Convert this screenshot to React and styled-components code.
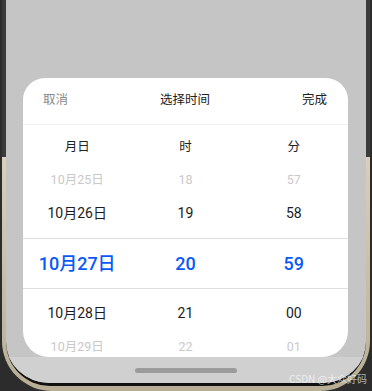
import React from "react";
import styled, { createGlobalStyle } from "styled-components";

const GlobalStyle = createGlobalStyle`
  html, body {
    margin: 0;
    padding: 0;
    background: #2c2c2c;
    font-family: "Noto Sans CJK SC", "Noto Sans", sans-serif;
  }
  * { box-sizing: border-box; }
`;

const days = ["10月25日", "10月26日", "10月27日", "10月28日", "10月29日"];
const hours = ["18", "19", "20", "21", "22"];
const minutes = ["57", "58", "59", "00", "01"];
const kinds = ["far", "near", "active", "near", "far"];

const Page = styled.div`
  width: 372px;
  height: 391px;
  overflow: hidden;
  position: relative;
`;

const Phone = styled.div`
  margin: 0 2px;
  height: 391px;
  padding: 0 4px 5px;
  border-radius: 0 0 50px 50px;
  background: linear-gradient(
    to bottom,
    #3b3b3b 0,
    #3b3b3b 157px,
    #d8d0bb 157px,
    #b8ae95 100%
  );
`;

const Screen = styled.div`
  height: 386px;
  display: flex;
  flex-direction: column;
  padding-top: 78px;
  background: #c5c5c5;
  border-bottom: 3px solid #111;
  border-radius: 0 0 44px 44px;
  overflow: hidden;
`;

const Sheet = styled.div`
  margin: 0 18px 0 17px;
  height: 279px;
  background: #fff;
  border-radius: 22px 22px 26px 26px;
  overflow: hidden;
  display: flex;
  flex-direction: column;
`;

const Header = styled.div`
  height: 47px;
  flex-shrink: 0;
  display: flex;
  align-items: center;
  justify-content: space-between;
  padding: 0 21px 3px 20px;
  border-bottom: 1px solid #f0f0f0;
  font-size: 12.5px;
  line-height: 1;
  color: #222;
`;

const HeaderButton = styled.span`
  color: ${(p) => (p.$muted ? "#8a8a8a" : "#222")};
`;

const Row = styled.div`
  display: grid;
  grid-template-columns: repeat(3, 1fr);
  flex-shrink: 0;
  align-items: center;
  justify-items: center;
  line-height: 1;
`;

const HeadRow = styled(Row)`
  height: 39px;
  padding: 4px 0 0;
  font-size: 12.5px;
  color: #222;
`;

const heights = { far: 33, near: 41, active: 51 };
const sizes = { far: "12.5px", near: "14px", active: "18px" };
const colors = { far: "#c9c9c9", near: "#1c1c1c", active: "#0a59f7" };

const ValueRow = styled(Row)`
  height: ${(p) => (p.$last ? 34 : heights[p.$kind])}px;
  font-family: Roboto, "Noto Sans CJK SC", sans-serif;
  font-size: ${(p) => sizes[p.$kind]};
  font-weight: ${(p) => (p.$kind === "active" ? 500 : 400)};
  color: ${(p) => colors[p.$kind]};
  padding-bottom: ${(p) => (p.$kind === "near" && p.$above ? 10 : 0)}px;
  padding-top: ${(p) => (p.$kind === "near" && !p.$above ? 6 : 0)}px;
  border-top: ${(p) => (p.$kind === "active" ? "1px solid #dedede" : "none")};
  border-bottom: ${(p) => (p.$kind === "active" ? "1px solid #dedede" : "none")};
`;

const NavBar = styled.div`
  flex: 1;
  background: #d0d0d0;
  display: flex;
  align-items: center;
  justify-content: center;
`;

const HomeIndicator = styled.div`
  width: 102px;
  height: 5px;
  border-radius: 3px;
  background: #9b9b9b;
`;

const Watermark = styled.span`
  position: absolute;
  right: 5px;
  bottom: 5px;
  font-size: 10px;
  color: rgba(255, 255, 255, 0.65);
  font-family: "Noto Sans CJK SC", sans-serif;
`;

export default function App() {
  return (
    <Page>
      <GlobalStyle />
      <Phone>
        <Screen>
          <Sheet>
            <Header>
              <HeaderButton $muted>取消</HeaderButton>
              <span>选择时间</span>
              <HeaderButton>完成</HeaderButton>
            </Header>
            <HeadRow>
              <span>月日</span>
              <span>时</span>
              <span>分</span>
            </HeadRow>
            {kinds.map((kind, i) => (
              <ValueRow key={i} $kind={kind} $above={i < 2} $last={i === 4}>
                <span>{days[i]}</span>
                <span>{hours[i]}</span>
                <span>{minutes[i]}</span>
              </ValueRow>
            ))}
          </Sheet>
          <NavBar>
            <HomeIndicator />
          </NavBar>
        </Screen>
      </Phone>
      <Watermark>CSDN @大众好码</Watermark>
    </Page>
  );
}
